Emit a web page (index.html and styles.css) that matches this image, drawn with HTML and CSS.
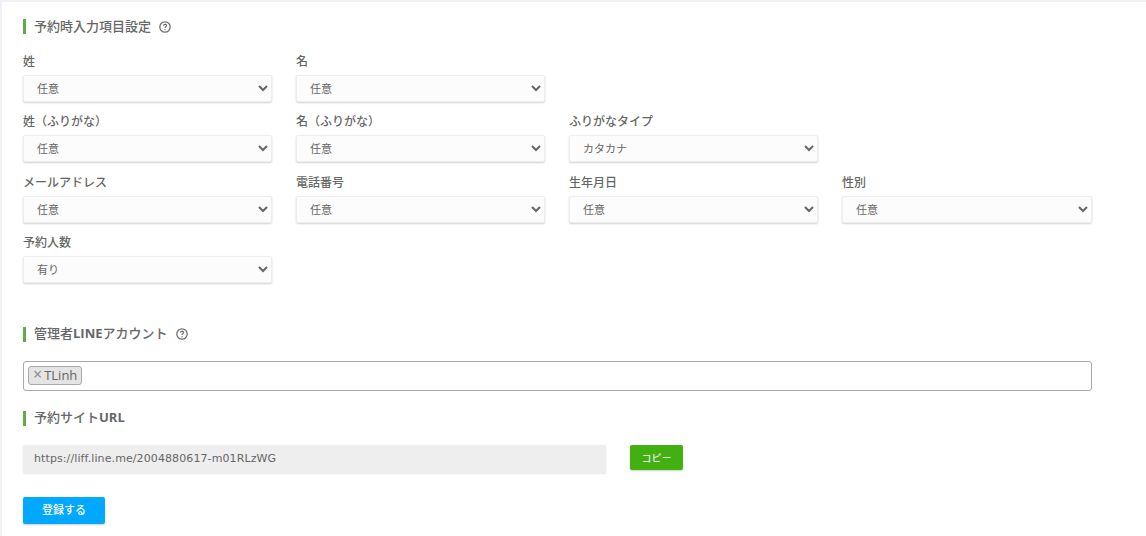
FILE: index.html
```html
<!DOCTYPE html>
<html lang="ja">
  <head>
    <meta charset="UTF-8" />
    <title>予約設定</title>
    <link rel="stylesheet" href="styles.css">
  </head>
  <body>
    <main class="card">
      <h2 class="heading">予約時入力項目設定
        <svg class="help" viewBox="0 0 12 12"><circle cx="6" cy="6" r="5.2"/><path d="M4.5 4.8c0-2 3-2 3-.2 0 1.200-1.500 1.100-1.500 2.500"/><path d="M6 8.200v1"/></svg>
      </h2>
      <div class="fields">
        <div class="field"><label>姓</label><select><option>任意</option></select></div>
        <div class="field"><label>名</label><select><option>任意</option></select></div>
        <div class="field field-break"><label>姓（ふりがな）</label><select><option>任意</option></select></div>
        <div class="field"><label>名（ふりがな）</label><select><option>任意</option></select></div>
        <div class="field"><label>ふりがなタイプ</label><select><option>カタカナ</option></select></div>
        <div class="field field-break"><label>メールアドレス</label><select><option>任意</option></select></div>
        <div class="field"><label>電話番号</label><select><option>任意</option></select></div>
        <div class="field"><label>生年月日</label><select><option>任意</option></select></div>
        <div class="field"><label>性別</label><select><option>任意</option></select></div>
        <div class="field field-break"><label>予約人数</label><select><option>有り</option></select></div>
      </div>

      <h2 class="heading heading-line"><span>管理者<b class="latin">LINE</b>アカウント</span>
        <svg class="help" viewBox="0 0 12 12"><circle cx="6" cy="6" r="5.2"/><path d="M4.5 4.8c0-2 3-2 3-.2 0 1.200-1.500 1.100-1.500 2.500"/><path d="M6 8.200v1"/></svg>
      </h2>
      <div class="tag-input">
        <span class="tag"><span class="tag-x">×</span>TLinh</span>
      </div>

      <h2 class="heading heading-url"><span>予約サイト<b class="latin">URL</b></span></h2>
      <div class="url-row">
        <div class="url-box">https://liff.line.me/2004880617-m01RLzWG</div>
        <button class="btn btn-copy" type="button">コピー</button>
      </div>
      <button class="btn btn-save" type="button">登録する</button>
    </main>
  </body>
</html>
```

FILE: styles.css
```css
html {
  font-family: "Open Sans", "Noto Sans CJK JP", sans-serif;
}

body {
  margin: 0;
  height: 536px;
  overflow: hidden;
  background-color: #f0f0f6;
  padding: 2px 0 0 2px;
  box-sizing: border-box;
  color: #666;
}

.card {
  box-sizing: border-box;
  background-color: #fff;
  height: 100%;
  padding: 17px 0 0 21px;
}

.heading {
  display: flex;
  align-items: center;
  box-sizing: border-box;
  margin: 0;
  height: 15px;
  padding: 0 0 3px 8px;
  border-left: 3px solid #62ab4b;
  font-size: 13px;
  font-weight: 500;
  color: #666;
}

.latin {
  font-weight: 700;
}

.heading-line {
  margin-top: 44px;
}

.heading-url {
  margin-top: 20px;
}

.help {
  width: 12px;
  height: 12px;
  margin: 3px 0 0 8px;
  fill: none;
  stroke: #707070;
  stroke-width: 1.300;
}

.fields {
  display: grid;
  grid-template-columns: repeat(3, 249px) 250px;
  column-gap: 24px;
  row-gap: 12.33px;
  margin-top: 20px;
}

.field-break {
  grid-column-start: 1;
}

.field label {
  display: block;
  height: 21px;
  line-height: 16px;
  font-size: 12px;
  font-weight: 500;
  color: #666;
}

.field select {
  display: block;
  width: 100%;
  height: 27px;
  padding: 0 4px 0 9px;
  border: 1px solid #eee;
  border-radius: 2px;
  background-color: #fcfcfc;
  box-shadow: 0 1px 2px rgba(0, 0, 0, 0.18);
  font-family: inherit;
  font-size: 11px;
  color: #666;
}

.tag-input {
  box-sizing: border-box;
  width: 1069px;
  height: 30px;
  margin-top: 19px;
  padding: 4px;
  border: 1px solid #a9a9a9;
  border-radius: 3px;
}

.tag {
  display: block;
  width: 54px;
  box-sizing: border-box;
  height: 19px;
  padding: 0 4px;
  border: 1px solid #aaa;
  border-radius: 3px;
  background-color: #e4e4e4;
  font-size: 13px;
  line-height: 15px;
  white-space: nowrap;
  color: #666;
}

.tag-x {
  margin-right: 2px;
  font-size: 16px;
  color: #888;
}

.url-row {
  display: flex;
  align-items: flex-start;
  margin-top: 19px;
}

.url-box {
  box-sizing: border-box;
  width: 583px;
  height: 28px;
  padding-left: 11px;
  background-color: #eee;
  border-radius: 2px;
  box-shadow: 0 1px 2px rgba(0, 0, 0, 0.1);
  font-family: "DejaVu Sans", sans-serif;
  font-size: 11px;
  line-height: 27px;
  letter-spacing: 0.1px;
  color: #666;
}

.btn {
  display: block;
  border: none;
  border-radius: 2px;
  color: #fff;
  font-family: inherit;
  box-shadow: 0 1px 2px rgba(0, 0, 0, 0.2);
  padding: 0;
}

.btn-copy {
  width: 53px;
  height: 25px;
  margin-left: 24px;
  background-color: #43b012;
  font-size: 10px;
}

.btn-save {
  width: 82px;
  height: 27px;
  margin-top: 24px;
  padding-bottom: 2px;
  background-color: #00a8ff;
  font-size: 11px;
  font-weight: 500;
}
```
